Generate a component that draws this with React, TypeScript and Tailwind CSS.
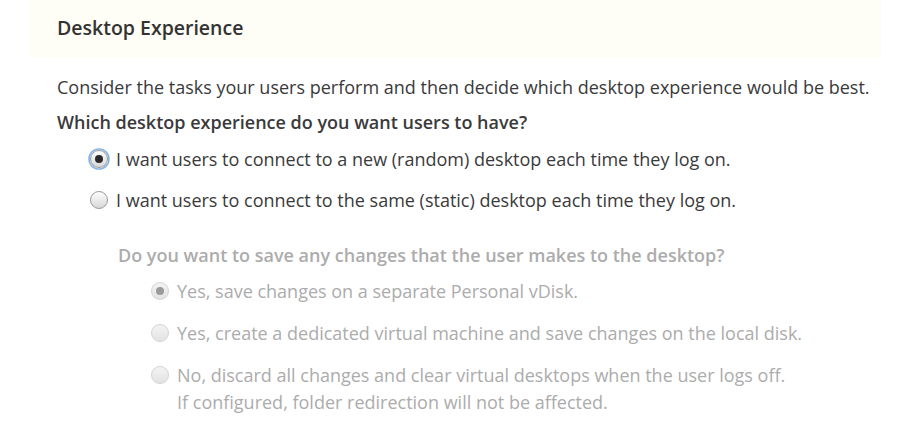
import React from "react";

// Desktop Experience wizard page: a mode choice plus a disabled follow-up group.

const FONT = "font-['Open_Sans',sans-serif]";

type RadioState = { checked?: boolean; disabled?: boolean; focused?: boolean };

function Radio({ checked, disabled, focused }: RadioState) {
  const ring = disabled ? "#d4d4d4" : "#9a9a9a";
  const top = disabled ? "#f4f4f4" : "#ffffff";
  const bottom = disabled ? "#e2e2e2" : "#d6d6d6";
  const dot = disabled ? "#9a9a9a" : "#2a2a2a";
  const id = `g-${checked ? 1 : 0}-${disabled ? 1 : 0}`;
  return (
    <svg width="22" height="22" viewBox="0 0 22 22" className="shrink-0">
      <defs>
        <linearGradient id={id} x1="0" y1="0" x2="0" y2="1">
          <stop offset="0" stopColor={top} />
          <stop offset="1" stopColor={bottom} />
        </linearGradient>
      </defs>
      {focused && <circle cx="11" cy="11" r="10" fill="none" stroke="#86b6e6" strokeWidth="1.6" />}
      <circle cx="11" cy="11" r="8.5" fill={`url(#${id})`} stroke={ring} strokeWidth="1" />
      {checked && <circle cx="11" cy="11" r="4" fill={dot} />}
    </svg>
  );
}

function Option({
  label,
  note,
  ...state
}: RadioState & { label: string; note?: string }) {
  return (
    <div className="flex items-start gap-[6px]">
      <div className="pt-[2px]">
        <Radio {...state} />
      </div>
      <div className={state.disabled ? "text-[#acacac]" : "text-[#3a3a3a]"}>
        <div>{label}</div>
        {note && <div>{note}</div>}
      </div>
    </div>
  );
}

export default function App() {
  return (
    <div className={`${FONT} w-[911px] h-[429px] bg-white text-[18px] leading-[27px] overflow-hidden`}>
      <div className="mx-[30px] h-[58px] bg-[#fffef6] pl-[27px] pt-[14px]">
        <h1 className="text-[19.5px] leading-[28px] font-semibold text-[#333]">Desktop Experience</h1>
      </div>

      <div className="pl-[57px] pt-[16px] text-[#3a3a3a]">
        <p>Consider the tasks your users perform and then decide which desktop experience would be best.</p>
        <p className="mt-[8px] font-semibold">Which desktop experience do you want users to have?</p>

        <div className="mt-[10px] ml-[31px] flex flex-col gap-[14px]">
          <Option checked focused label="I want users to connect to a new (random) desktop each time they log on." />
          <Option label="I want users to connect to the same (static) desktop each time they log on." />
        </div>

        <div className="mt-[28px] ml-[61px] text-[#acacac]">
          <p className="font-semibold">Do you want to save any changes that the user makes to the desktop?</p>
          <div className="mt-[9px] ml-[31px] flex flex-col gap-[15px]">
            <Option disabled checked label="Yes, save changes on a separate Personal vDisk." />
            <Option disabled label="Yes, create a dedicated virtual machine and save changes on the local disk." />
            <Option
              disabled
              label="No, discard all changes and clear virtual desktops when the user logs off."
              note="If configured, folder redirection will not be affected."
            />
          </div>
        </div>
      </div>
    </div>
  );
}
